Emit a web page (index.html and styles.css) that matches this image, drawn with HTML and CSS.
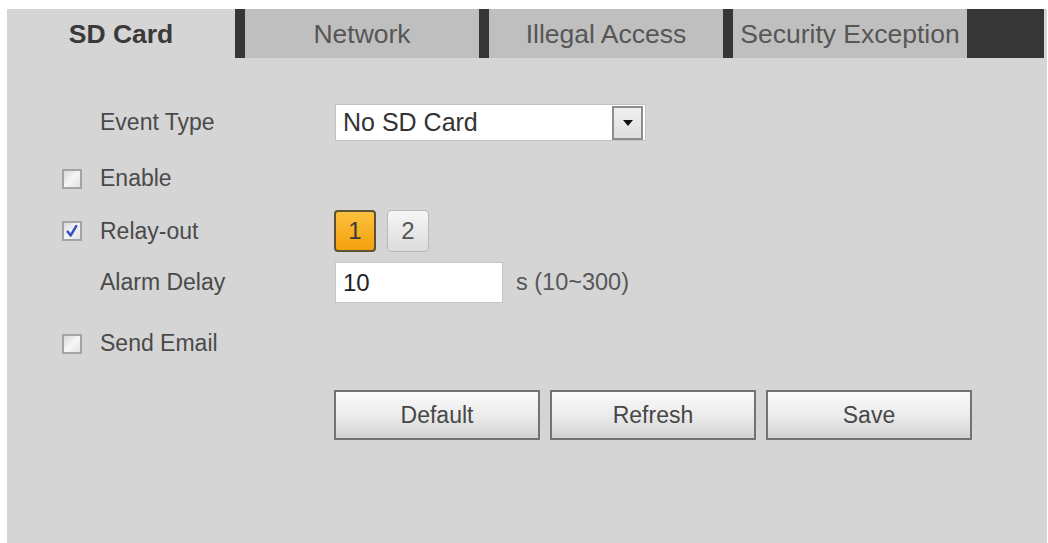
FILE: index.html
```html
<!DOCTYPE html>
<html>
<head>
<meta charset="utf-8">
<link rel="stylesheet" href="styles.css">
</head>
<body>
<div class="panel">
  <div class="tabs">
    <div class="tab active">SD Card</div>
    <div class="tab">Network</div>
    <div class="tab">Illegal Access</div>
    <div class="tab">Security Exception</div>
    <div class="tab-fill"></div>
  </div>
  <div class="form">
    <div class="row row-event">
      <span class="cb-cell"></span>
      <span class="label">Event Type</span>
      <div class="select">
        <span class="select-text">No SD Card</span>
        <span class="select-btn"><span class="arrow"></span></span>
      </div>
    </div>
    <div class="row row-enable">
      <span class="cb-cell"><span class="checkbox"></span></span>
      <span class="label">Enable</span>
      <span></span>
    </div>
    <div class="row row-relay">
      <span class="cb-cell"><span class="checkbox checked"><svg viewBox="0 0 12 12" width="14" height="14"><path d="M2.4 6.6 L4.9 9.8 L9.6 1.8" fill="none" stroke="#3a4fc4" stroke-width="2.2" stroke-linecap="round" stroke-linejoin="round"/></svg></span></span>
      <span class="label">Relay-out</span>
      <div class="relays">
        <span class="relay on">1</span>
        <span class="relay">2</span>
      </div>
    </div>
    <div class="row row-delay">
      <span class="cb-cell"></span>
      <span class="label">Alarm Delay</span>
      <div class="delay">
        <span class="input">10</span>
        <span class="hint">s (10~300)</span>
      </div>
    </div>
    <div class="row row-email">
      <span class="cb-cell"><span class="checkbox"></span></span>
      <span class="label">Send Email</span>
      <span></span>
    </div>
    <div class="row row-actions">
      <span class="cb-cell"></span>
      <span></span>
      <div class="actions">
        <span class="btn">Default</span>
        <span class="btn">Refresh</span>
        <span class="btn">Save</span>
      </div>
    </div>
  </div>
</div>
</body>
</html>
```

FILE: styles.css
```css
html, body {
  margin: 0;
  padding: 0;
  background: #ffffff;
}
body {
  font-family: "Liberation Sans", Arial, sans-serif;
  overflow: hidden;
}
.panel {
  margin: 9px 0 0 7px;
  width: 1040px;
  height: 534px;
  background: #d5d5d5;
}
.tabs {
  display: flex;
  height: 49px;
}
.tab {
  box-sizing: border-box;
  width: 244px;
  border-left: 10px solid #363636;
  background: #bfbfbf;
  color: #565656;
  font-size: 26.5px;
  display: flex;
  align-items: center;
  justify-content: center;
  white-space: nowrap;
  padding-top: 2px;
}
.tab.active {
  width: 228px;
  border-left: none;
  background: #d5d5d5;
  color: #3a3a3a;
  font-weight: bold;
}
.tab-fill {
  width: 77px;
  background: #363636;
}
.form {
  padding-left: 55px;
}
.row {
  display: grid;
  grid-template-columns: 38px 234px 1fr;
  align-items: center;
}
.label {
  font-size: 23px;
  color: #4a4a4a;
}
.cb-cell {
  display: flex;
  align-items: center;
}
.checkbox {
  box-sizing: border-box;
  width: 20px;
  height: 20px;
  border: 2px solid #a4a4a4;
  background: linear-gradient(135deg, #d8d8d8 0%, #f6f6f6 50%, #e2e2e2 100%);
  display: flex;
  align-items: center;
  justify-content: center;
}
.row-event {
  margin-top: 46px;
  height: 37px;
}
.select {
  box-sizing: border-box;
  width: 311px;
  height: 37px;
  margin-left: 1px;
  background: #ffffff;
  border: 1px solid #c2c2c2;
  display: flex;
  align-items: center;
  justify-content: space-between;
  padding: 0 2px 0 7px;
}
.select-text {
  font-size: 25px;
  color: #333333;
}
.select-btn {
  box-sizing: border-box;
  width: 31px;
  height: 34px;
  border: 2px solid #8d8d8d;
  background: linear-gradient(#f0f0f0, #dedede);
  display: flex;
  align-items: center;
  justify-content: center;
}
.arrow {
  width: 0;
  height: 0;
  border-left: 5px solid transparent;
  border-right: 5px solid transparent;
  border-top: 6px solid #111111;
}
.row-enable {
  margin-top: 24px;
  height: 24px;
}
.row-relay {
  margin-top: 21px;
  height: 42px;
}
.relays {
  display: flex;
  gap: 11px;
}
.relay {
  box-sizing: border-box;
  width: 42px;
  height: 42px;
  border-radius: 4px;
  border: 1.5px solid #b8b8b8;
  background: linear-gradient(#f6f6f6, #dcdcdc);
  color: #555555;
  font-size: 24px;
  display: flex;
  align-items: center;
  justify-content: center;
}
.relay.on {
  border: 2px solid #5d5332;
  background: linear-gradient(#fcc040, #f4a20c);
  color: #3a3a3a;
}
.row-delay {
  margin-top: 10px;
  height: 41px;
}
.delay {
  display: flex;
  align-items: center;
}
.input {
  box-sizing: border-box;
  width: 168px;
  height: 41px;
  margin-left: 1px;
  background: #ffffff;
  border: 1px solid #c6c6c6;
  font-size: 24px;
  color: #222222;
  padding-left: 7px;
  display: flex;
  align-items: center;
}
.hint {
  margin-left: 13px;
  font-size: 23.5px;
  color: #575757;
}
.row-email {
  margin-top: 27px;
  height: 24px;
}
.row-actions {
  margin-top: 36px;
  height: 50px;
}
.actions {
  display: flex;
  gap: 10px;
}
.btn {
  box-sizing: border-box;
  width: 206px;
  height: 50px;
  border: 2px solid #727272;
  background: linear-gradient(#fafafa, #ececec 50%, #d2d2d2);
  color: #474747;
  font-size: 23px;
  display: flex;
  align-items: center;
  justify-content: center;
}
```
